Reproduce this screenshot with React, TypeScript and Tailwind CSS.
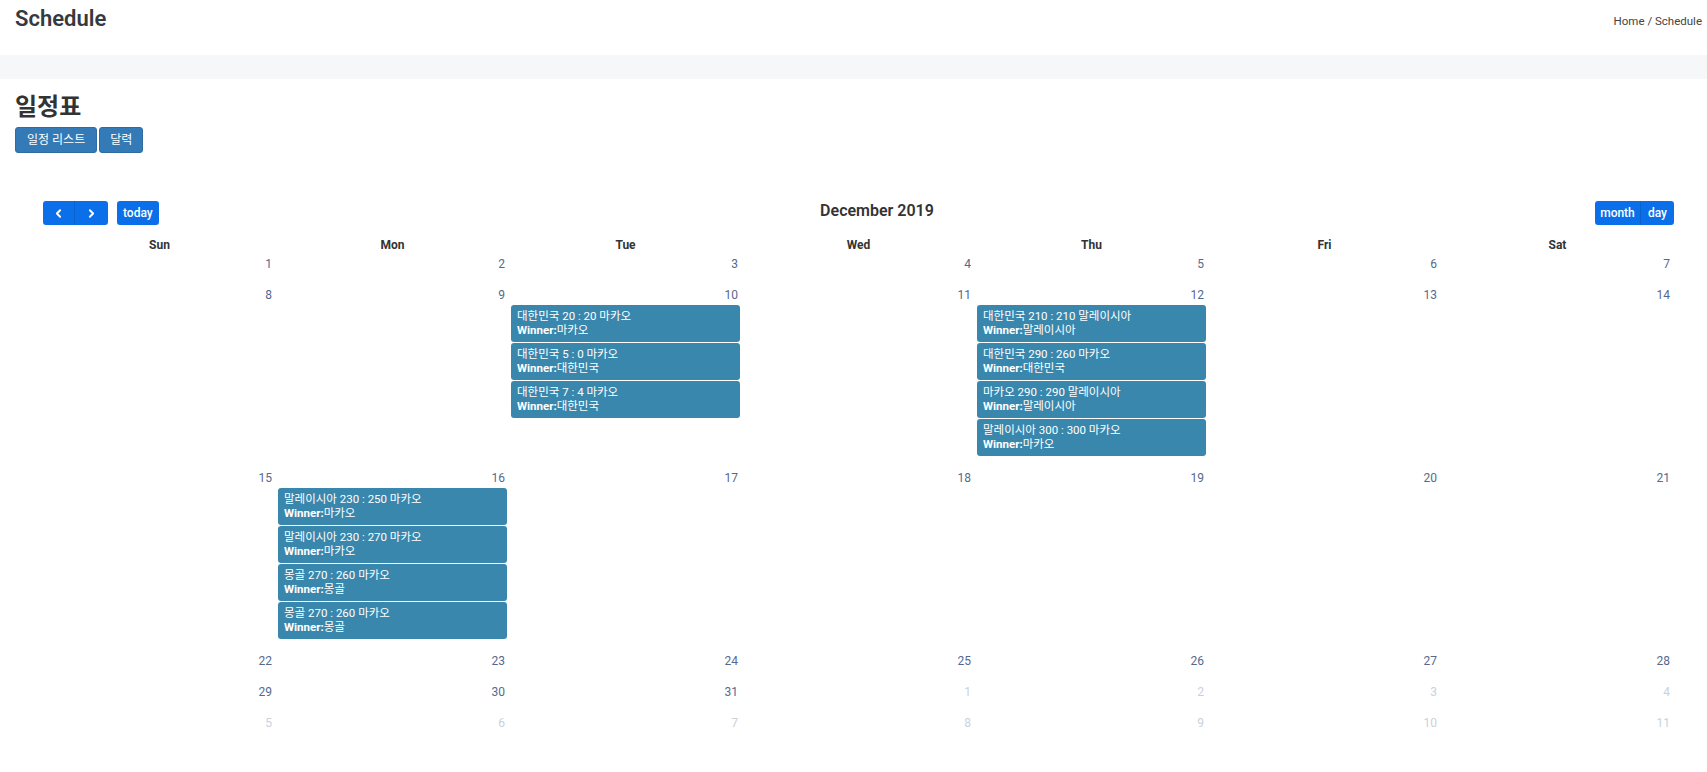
import { ChevronLeft, ChevronRight } from 'lucide-react'

type Match = { title: string; winner: string }

type Day = { n: number; other?: boolean; events?: Match[] }

const weeks: Day[][] = [
  [1, 2, 3, 4, 5, 6, 7].map((n) => ({ n })),
  [
    { n: 8 },
    { n: 9 },
    {
      n: 10,
      events: [
        { title: '대한민국 20 : 20 마카오', winner: '마카오' },
        { title: '대한민국 5 : 0 마카오', winner: '대한민국' },
        { title: '대한민국 7 : 4 마카오', winner: '대한민국' },
      ],
    },
    { n: 11 },
    {
      n: 12,
      events: [
        { title: '대한민국 210 : 210 말레이시아', winner: '말레이시아' },
        { title: '대한민국 290 : 260 마카오', winner: '대한민국' },
        { title: '마카오 290 : 290 말레이시아', winner: '말레이시아' },
        { title: '말레이시아 300 : 300 마카오', winner: '마카오' },
      ],
    },
    { n: 13 },
    { n: 14 },
  ],
  [
    { n: 15 },
    {
      n: 16,
      events: [
        { title: '말레이시아 230 : 250 마카오', winner: '마카오' },
        { title: '말레이시아 230 : 270 마카오', winner: '마카오' },
        { title: '몽골 270 : 260 마카오', winner: '몽골' },
        { title: '몽골 270 : 260 마카오', winner: '몽골' },
      ],
    },
    { n: 17 },
    { n: 18 },
    { n: 19 },
    { n: 20 },
    { n: 21 },
  ],
  [22, 23, 24, 25, 26, 27, 28].map((n) => ({ n })),
  [
    { n: 29 },
    { n: 30 },
    { n: 31 },
    { n: 1, other: true },
    { n: 2, other: true },
    { n: 3, other: true },
    { n: 4, other: true },
  ],
  [5, 6, 7, 8, 9, 10, 11].map((n) => ({ n, other: true })),
]

const dayNames = ['Sun', 'Mon', 'Tue', 'Wed', 'Thu', 'Fri', 'Sat']

function EventCard({ ev }: { ev: Match }) {
  return (
    <div className="mx-[2px] mb-[1px] h-[37px] rounded-[3px] bg-[#3a87ad] px-[6px] pt-[4px] text-[11.5px] leading-[14px] text-white">
      <div className="whitespace-nowrap">{ev.title}</div>
      <div className="whitespace-nowrap">
        <span className="font-bold">Winner:</span>
        {ev.winner}
      </div>
    </div>
  )
}

export default function App() {
  return (
    <div className="min-h-[772px] bg-white font-['Roboto','Noto_Sans_CJK_KR',sans-serif] text-[#333]">
      <div className="flex h-[55px] items-start justify-between pl-[15px] pr-[5px]">
        <h2 className="pt-[5px] text-[22px] font-semibold leading-[28px] text-[#343a40]">Schedule</h2>
        <div className="mt-[13px] text-[11.5px] leading-[16px] text-[#444]">Home / Schedule</div>
      </div>
      <div className="h-[24px] bg-[#f6f7f9]" />

      <div className="px-[15px] pt-[14px]">
        <h1 className="text-[24px] font-bold leading-[28px] text-[#333]">일정표</h1>
        <div className="mt-[6px] flex gap-[2px]">
          <button className="h-[26px] rounded-[3px] border border-[#2e6da4] bg-[#337ab7] px-[11px] text-[12px] text-white">
            일정 리스트
          </button>
          <button className="h-[26px] rounded-[3px] border border-[#2e6da4] bg-[#337ab7] px-[10px] text-[12px] text-white">
            달력
          </button>
        </div>
      </div>

      <div className="mt-[48px] pl-[43px] pr-[33px]">
        <div className="flex h-[24px] items-center justify-between">
          <div className="flex w-[200px] items-center gap-[9px]">
            <div className="flex h-[24px] overflow-hidden rounded-[3px] bg-[#0a6fe8]">
              <button className="flex w-[32px] items-center justify-center border-r border-[#0a62cc] text-white">
                <ChevronLeft size={13} strokeWidth={3.5} />
              </button>
              <button className="flex w-[33px] items-center justify-center text-white">
                <ChevronRight size={13} strokeWidth={3.5} />
              </button>
            </div>
            <button className="h-[24px] rounded-[3px] bg-[#0a6fe8] px-[6px] text-[12px] font-medium text-white">
              today
            </button>
          </div>
          <h2 className="mb-[5px] text-[16px] font-semibold text-[#333]">December 2019</h2>
          <div className="flex w-[163px] justify-end">
            <div className="flex h-[24px] overflow-hidden rounded-[3px] bg-[#0a6fe8] text-[12px] font-medium text-white">
              <button className="w-[46px] border-r border-[#0a62cc]">month</button>
              <button className="w-[33px]">day</button>
            </div>
          </div>
        </div>

        <div className="mt-[11px] grid h-[18px] grid-cols-7 text-[12px] font-bold leading-[18px] text-[#333]">
          {dayNames.map((d) => (
            <div key={d} className="text-center">
              {d}
            </div>
          ))}
        </div>

        {weeks.map((week, wi) => (
          <div key={wi} className="grid grid-cols-7">
            {week.map((day, di) => (
              <div key={di} className="pb-[11px]">
                <div
                  className={`h-[20px] pr-[4px] text-right text-[12px] leading-[20px] ${
                    day.other ? 'text-[#c8d2de]' : 'text-[#56698d]'
                  }`}
                >
                  {day.n}
                </div>
                {day.events?.map((ev, ei) => (
                  <EventCard key={ei} ev={ev} />
                ))}
              </div>
            ))}
          </div>
        ))}
      </div>
    </div>
  )
}
